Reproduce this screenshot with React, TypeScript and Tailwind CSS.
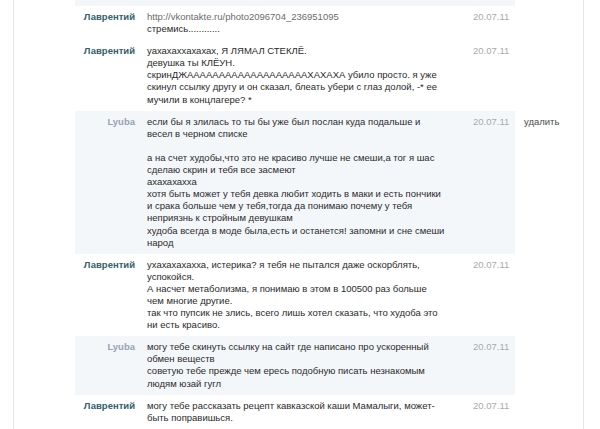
type Msg = {
  author: string
  lyuba?: boolean
  lines: { t: string; link?: boolean }[]
  remove?: boolean
}

const L = (t: string, link = false) => ({ t, link })

const messages: Msg[] = [
  {
    author: 'Лаврентий',
    lines: [L('http://vkontakte.ru/photo2096704_236951095', true), L('стремись............')],
  },
  {
    author: 'Лаврентий',
    lines: [
      L('уахахаххахахах, Я ЛЯМАЛ СТЕКЛЁ.'),
      L('девушка ты КЛЁУН.'),
      L('скринДЖАААААААААААААААААААХАХАХА убило просто. я уже'),
      L('скинул ссылку другу и он сказал, блеать убери с глаз долой, -* ее'),
      L('мучили в концлагере? *'),
    ],
  },
  {
    author: 'Lyuba',
    lyuba: true,
    remove: true,
    lines: [
      L('если бы я злилась то ты бы уже был послан куда подальше и'),
      L('весел в черном списке'),
      L(''),
      L('а на счет худобы,что это не красиво лучше не смеши,а тог я шас'),
      L('сделаю скрин и тебя все засмеют'),
      L('ахахахахха'),
      L('хотя быть может у тебя девка любит ходить в маки и есть пончики'),
      L('и срака больше чем у тебя,тогда да понимаю почему у тебя'),
      L('неприязнь к стройным девушкам'),
      L('худоба всегда в моде была,есть и останется! запомни и сне смеши'),
      L('народ'),
    ],
  },
  {
    author: 'Лаврентий',
    lines: [
      L('ухахахахахха, истерика? я тебя не пытался даже оскорблять,'),
      L('успокойся.'),
      L('А насчет метаболизма, я понимаю в этом в 100500 раз больше'),
      L('чем многие другие.'),
      L('так что пупсик не злись, всего лишь хотел сказать, что худоба это'),
      L('ни есть красиво.'),
    ],
  },
  {
    author: 'Lyuba',
    lyuba: true,
    lines: [
      L('могу тебе скинуть ссылку на сайт где написано про ускоренный'),
      L('обмен веществ'),
      L('советую тебе прежде чем ересь подобную писать незнакомым'),
      L('людям юзай гугл'),
    ],
  },
  {
    author: 'Лаврентий',
    lines: [
      L('могу тебе рассказать рецепт кавказской каши Мамалыги, может-'),
      L('быть поправишься.'),
    ],
  },
]

function Row({ m }: { m: Msg }) {
  return (
    <div className="flex">
      <div className={`ml-[61px] flex w-[440px] py-[5px] ${m.lyuba ? 'bg-[#f4f7fa]' : ''}`}>
        <div
          className={`w-[60px] text-right font-bold ${m.lyuba ? 'text-[#93a5b2]' : 'text-[#335f6c]'}`}
        >
          {m.author}
        </div>
        <div className="w-[338px] pl-[12px] text-[#2a2a2a]">
          {m.lines.map((l, i) => (
            <div key={i} className={`h-[12.1px] whitespace-nowrap ${l.link ? 'text-[#6b6b6b]' : ''}`}>
              {l.t}
            </div>
          ))}
        </div>
        <div className="w-[42px] text-[#a9a9a9]">20.07.11</div>
      </div>
      {m.remove && <div className="ml-[9px] pt-[5px] text-[#4a4a4a]">удалить</div>}
    </div>
  )
}

export default function App() {
  return (
    <div className="h-[429px] w-[600px] overflow-hidden bg-white font-['Liberation_Sans',Arial,sans-serif] text-[9.5px] leading-[12px]">
      <div className="ml-[13px] h-full w-[571px] border-x border-[#e6e6e6]">
        <div className="ml-[61px] h-[6px] w-[440px] bg-[#f4f7fa]" />
        {messages.map((m, i) => (
          <Row key={i} m={m} />
        ))}
      </div>
    </div>
  )
}
